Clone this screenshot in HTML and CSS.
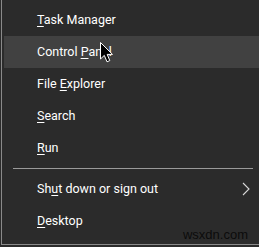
FILE: index.html
```html
<!DOCTYPE html>
<html lang="en">
<head>
  <meta charset="UTF-8">
  <title>Quick Link Menu</title>
  <link rel="stylesheet" href="styles.css">
</head>
<body>
  <div class="menu">
    <ul class="group">
      <li class="item"><u>T</u>ask Manager</li>
      <li class="item active">Control <u>P</u>anel</li>
      <li class="item">File <u>E</u>xplorer</li>
      <li class="item"><u>S</u>earch</li>
      <li class="item"><u>R</u>un</li>
    </ul>
    <div class="separator"></div>
    <ul class="group">
      <li class="item has-sub">
        <span>Sh<u>u</u>t down or sign out</span>
        <svg class="chevron" width="8" height="14" viewBox="0 0 8 14">
          <polyline points="1,1 7,7 1,13" fill="none" stroke="#d8d8d8" stroke-width="1.1"/>
        </svg>
      </li>
      <li class="item"><u>D</u>esktop</li>
    </ul>
    <span class="watermark">wsxdn.com</span>

    <!-- mouse pointer over Control Panel -->
    <svg class="cursor" width="14" height="22" viewBox="0 0 14 22">
      <path d="M0.5 0.5 L0.5 17 L4.3 13.4 L7 19.8 L9.8 18.6 L7.2 12.4 L12.5 12.4 Z" fill="#000" stroke="#fff" stroke-width="1" stroke-linejoin="round"/>
    </svg>
  </div>
</body>
</html>
```

FILE: styles.css
```css
* {
  box-sizing: border-box;
  margin: 0;
  padding: 0;
}

body {
  background: #2b2b2b;
  width: 259px;
  height: 247px;
  overflow: hidden;
  font-family: Roboto, "Open Sans", sans-serif;
}

.menu {
  position: relative;
  width: 259px;
  height: 245px;
  margin-left: 1px;
  padding: 4px 0 0 2px;
  border-left: 1px solid #8a8a8a;
  border-bottom: 1px solid #8a8a8a;
  background: #2b2b2b;
}

.group {
  list-style: none;
}

.item {
  height: 32px;
  line-height: 32px;
  padding-left: 33px;
  color: #fff;
  font-size: 12.5px;
  white-space: nowrap;
}

.item u {
  text-underline-offset: 2px;
}

.item.active {
  background: #414141;
}

.has-sub {
  display: flex;
  justify-content: space-between;
  align-items: center;
  padding-right: 10px;
}

.separator {
  height: 1px;
  margin: 4px 7px 4px 9px;
  background: #9a9a9a;
}

.watermark {
  position: absolute;
  right: 12px;
  bottom: 2px;
  font-family: "Liberation Sans", sans-serif;
  font-size: 13px;
  color: #0c0c0c;
}

.cursor {
  position: absolute;
  left: 98px;
  top: 42px;
}
```
